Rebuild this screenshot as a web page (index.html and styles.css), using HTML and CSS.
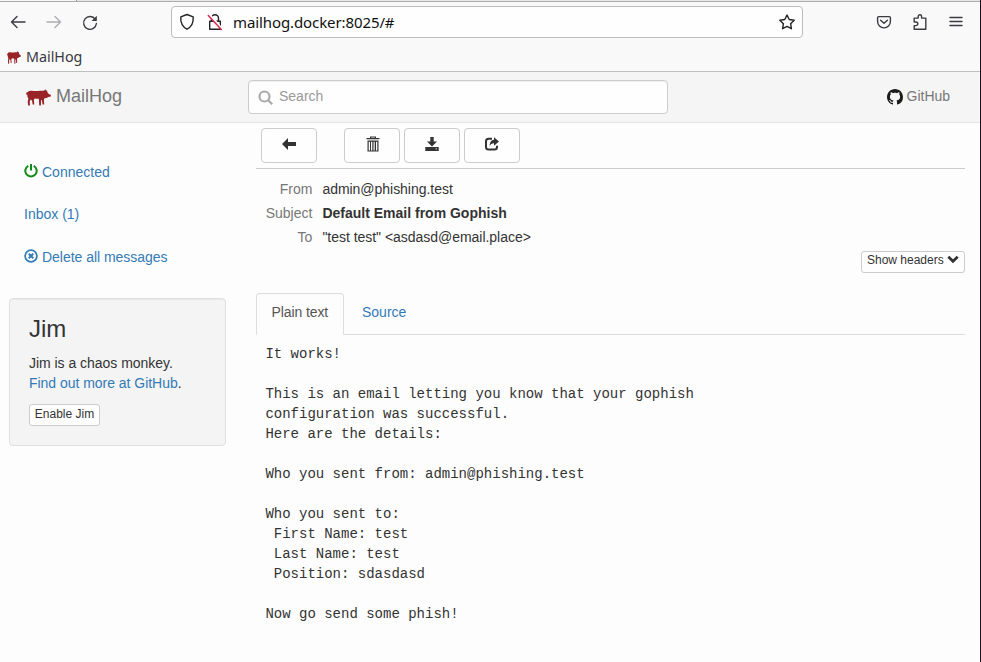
FILE: index.html
```html
<!DOCTYPE html>
<html lang="en">
<head>
<meta charset="utf-8">
<title>MailHog</title>
<link rel="stylesheet" href="styles.css">
</head>
<body>
<svg class="defs" width="0" height="0">
  <symbol id="pig" viewBox="0 0 24 16">
    <path fill="#982427" d="M1 5.800C-.3 5 .1 2.800 1.300 3L2.200 2.200C3.500 1.100 5.300 1.600 7 1.700C10 1.900 12.800 1.200 15.500 1.500L17.200 1.500L18.600 0L19.200 1.500L20.300 1L20.400 2.800L21.800 4.700L24 5.700L23.400 7.200L21.300 7.400C20 8.600 18.700 8.500 17.700 8.700L17.200 10.200L17.500 14.800H15.900L15.300 10.600L14.500 10.300L14.300 15.600H12.700L12.300 9.200C10.500 9.300 9 9 8.300 8.900L7.500 10.400L8 14.800H6.400L5.800 11L4.600 9.900L3.600 11.700L3.800 15.600H2.100L1.600 12L2.300 9C1.300 7.700 1.100 6.500 1.400 4.500Z"/>
  </symbol>
</svg>
<div class="window">
  <div class="tabedge"></div>
  <div class="navbar">
    <svg class="ic back" width="16" height="16" viewBox="0 0 16 16"><path d="M15 8H1.500M7 2.500L1.500 8L7 13.500"/></svg>
    <svg class="ic fwd" width="16" height="16" viewBox="0 0 16 16"><path d="M1 8H14.500M9 2.500L14.500 8L9 13.500"/></svg>
    <svg class="ic reload" width="16" height="16" viewBox="0 0 16 16"><path d="M13.300 4.300A6.400 6.400 0 1 0 14.400 8.500"/><path class="solid" d="M14.800.8V6H9.600Z"/></svg>
    <div class="url">
      <svg class="ic shield" width="16" height="18" viewBox="0 0 16 18"><path d="M8 1.500L14.200 3.900C14.600 9.500 12.300 14 8 16.200C3.700 14 1.400 9.500 1.800 3.900Z"/></svg>
      <svg class="ic lock" width="16" height="18" viewBox="0 0 16 18"><path d="M4.500 8V5.300A3.500 3.500 0 0 1 11.500 5.300V8M2.700 8.200H13.300V16.200H2.700Z"/><path class="halo" d="M2.800 2L15.300 16"/><path class="slash" d="M1.300 2.500L14.300 16.500"/></svg>
      <span class="address">mailhog.docker:8025/#</span>
      <svg class="ic star" width="16" height="16" viewBox="0 0 16 16"><path d="M8 1L10.200 5.500L15.200 6.200L11.600 9.700L12.400 14.700L8 12.400L3.600 14.700L4.400 9.700L.8 6.200L5.800 5.500Z"/></svg>
    </div>
    <svg class="ic pocket" width="16" height="16" viewBox="0 0 16 16"><path d="M2.700 2.600H13.300Q14.400 2.600 14.400 3.700V7.500A6.400 6.400 0 0 1 1.600 7.500V3.700Q1.600 2.600 2.700 2.600ZM4.600 6.200L8 9.300L11.400 6.200"/></svg>
    <svg class="ic puzzle" width="16" height="18" viewBox="0 0 16 18"><path d="M6.200 5.100V3.400A1.700 1.700 0 0 1 9.600 3.400V5.100H13.800V16.200H2.200V12.600H4A1.800 1.800 0 0 0 4 9H2.200V5.100Z"/></svg>
    <svg class="ic menu" width="14" height="14" viewBox="0 0 14 14"><path d="M1 2.500H13M1 6.500H13M1 10.500H13"/></svg>
  </div>
  <div class="bookmarks">
    <svg class="minipig" width="14" height="13" viewBox="0 0 24 16" preserveAspectRatio="none"><use href="#pig" width="24" height="16"/></svg>
    <span>MailHog</span>
  </div>
  <header class="top">
    <a class="brand"><svg width="25" height="17"><use href="#pig" width="25" height="17"/></svg><span>MailHog</span></a>
    <div class="search">
      <svg width="16" height="16" viewBox="0 0 16 16"><circle cx="6.500" cy="6.500" r="5" /><path d="M10.200 10.200L14.200 14.200"/></svg>
      <span>Search</span>
    </div>
    <a class="github"><svg width="16" height="16" viewBox="0 0 16 16"><path d="M8 0C3.580 0 0 3.580 0 8c0 3.540 2.290 6.530 5.470 7.590.4.070.55-.17.55-.38 0-.19-.01-.82-.01-1.490-2.010.37-2.530-.49-2.690-.94-.09-.23-.48-.94-.82-1.130-.28-.15-.68-.52-.01-.53.63-.01 1.080.58 1.230.82.72 1.210 1.870.87 2.330.66.07-.52.28-.87.51-1.070-1.780-.2-3.640-.89-3.640-3.950 0-.87.31-1.590.82-2.150-.08-.2-.36-1.020.08-2.120 0 0 .67-.21 2.200.82.64-.18 1.320-.27 2-.27s1.360.09 2 .27c1.530-1.040 2.200-.82 2.200-.82.44 1.100.16 1.920.08 2.120.51.56.82 1.270.82 2.150 0 3.070-1.870 3.750-3.650 3.950.29.25.54.73.54 1.480 0 1.070-.01 1.930-.01 2.200 0 .21.15.46.55.38A8.010 8.010 0 0 0 16 8c0-4.420-3.580-8-8-8Z"/></svg><span>GitHub</span></a>
  </header>
  <div class="content">
    <aside>
      <nav>
        <a><svg width="14" height="14" viewBox="0 0 14 14"><path class="power" d="M4.300 1.800A5.700 5.700 0 1 0 9.700 1.800M7 0V6.500"/></svg><span>Connected</span></a>
        <a><span class="inbox">Inbox (1)</span></a>
        <a><svg width="14" height="14" viewBox="0 0 14 14"><circle class="ring" cx="7" cy="7" r="5.900"/><path class="cross" d="M4.700 4.700L9.300 9.300M9.300 4.700L4.700 9.300"/></svg><span class="delete">Delete all messages</span></a>
      </nav>
      <section class="well">
        <h3>Jim</h3>
        <p><span class="chaos">Jim is a chaos monkey.</span><br><a>Find out more at GitHub</a>.</p>
        <button>Enable Jim</button>
      </section>
    </aside>
    <main>
      <div class="toolbar">
        <button><svg width="16" height="14" viewBox="0 0 16 14"><path d="M1 7L7 1V5H15V9H7V13Z"/></svg></button>
        <button class="gap"><svg width="14" height="16" viewBox="0 0 14 16"><path d="M4 2V.5H10V2H13.500V3.300H.5V2ZM5.200 2H8.800V1.500H5.200ZM1.500 4.500H12.500V15.500H1.500ZM2.700 5.700V14.500H4V5.700ZM5 5.700V14.500H6.300V5.700ZM7.500 5.700V14.500H8.700V5.700ZM10 5.700V14.500H11.300V5.700Z" fill-rule="evenodd"/></svg></button>
        <button><svg width="14" height="14" viewBox="0 0 14 14"><path d="M5.300 0H8.700V4.500H12L7 9.500L2 4.500H5.300ZM.3 10H13.700V14H.3ZM10.500 11.500V12.200H12V11.500Z" fill-rule="evenodd"/></svg></button>
        <button><svg width="14" height="14" viewBox="0 0 14 14"><path class="box" d="M7 1.800H3.500Q1 1.800 1 4.300V10Q1 12.500 3.500 12.500H9.500Q12 12.500 12 10V8.800"/><path d="M9 .3L14 4.500L9 8.700V6.300Q6 6 4.500 9Q4.800 3.200 9 2.700Z"/></svg></button>
      </div>
      <div class="meta">
        <dl>
          <dt>From</dt><dd class="from">admin@phishing.test</dd>
          <dt>Subject</dt><dd class="subject">Default Email from Gophish</dd>
          <dt>To</dt><dd class="to">"test test" &lt;asdasd@email.place&gt;</dd>
        </dl>
        <button class="headers">Show headers <svg width="12" height="9" viewBox="0 0 12 9"><path d="M1.300 1.800L6 6.300L10.700 1.800"/></svg></button>
      </div>
      <div class="tabs"><a class="active">Plain text</a><a class="source">Source</a></div>
<pre>It works!

This is an email letting you know that your gophish
configuration was successful.
Here are the details:

Who you sent from: admin@phishing.test

Who you sent to:
 First Name: test
 Last Name: test
 Position: sdasdasd

Now go send some phish!</pre>
    </main>
  </div>
</div>
</body>
</html>
```
FILE: styles.css
```css
* { box-sizing: border-box; }
body { margin: 0; background: #fdfdfd; color: #333; font: 14px/20px "Liberation Sans", Arial, sans-serif; }
.defs { display: block; height: 0; }
svg { flex: none; display: block; }
button { font: inherit; color: #333; background: #fefefe; border: 1px solid #ccc; border-radius: 4px; padding: 0; }
.window { width: 981px; height: 662px; overflow: hidden; border-right: 1px solid #210d22; }
.tabedge { height: 2px; background: linear-gradient(90deg, #f5f7f6 76px, #999 76px 77px, #e6e8e7 77px) top / 100% 1px no-repeat, #aaadab; }

.navbar { height: 41px; background: #f9f9fa; display: flex; align-items: flex-start; padding: 4px 0 0 10px; }
.ic { fill: none; stroke: #3b3b40; stroke-width: 1.4; stroke-linejoin: round; stroke-linecap: round; }
.navbar > .ic { margin-top: 8px; }
.navbar > .fwd { stroke: #adadb0; margin-left: 20px; }
.navbar > .reload { margin-left: 20px; margin-top: 9px; }
.ic .solid { fill: #3b3b40; stroke: none; }
.url { width: 632px; height: 32px; margin: 0 73px 0 73px; border: 1px solid #bdbdc0; border-radius: 4px; background: #fefefe; display: flex; align-items: center; padding: 0 0 0 7px; }
.url .ic { stroke: #222226; }
.lock { margin-left: 12px; }
.lock .halo { stroke: #fff; stroke-width: 2; }
.ic .slash { stroke: #e22850; stroke-width: 1.5; }
.address { font: 15px/20px "Noto Sans", sans-serif; color: #111; margin-left: 10px; width: 546px; letter-spacing: -.1px; }
.navbar > .puzzle { margin-left: 20px; margin-top: 7px; }
.navbar > .menu { margin-left: 21px; margin-top: 9px; }

.bookmarks { height: 29px; background: #f9f9fa; border-bottom: 1px solid #bfbfc1; display: flex; align-items: center; padding-left: 7px; gap: 5px; font: 14.3px/20px "Noto Sans", sans-serif; color: #38383d; }

.top { height: 51px; background: #f5f5f5; border-bottom: 1px solid #e5e5e5; display: flex; align-items: center; padding-left: 26px; color: #777; }
.brand { display: flex; align-items: center; gap: 5px; width: 222px; font-size: 18px; }
.brand span { margin-top: -2px; }
.search { width: 420px; height: 34px; border: 1px solid #ccc; border-radius: 4px; background: #fefefe; box-shadow: inset 0 1px 1px rgba(0,0,0,.06); display: flex; align-items: center; gap: 5px; padding-left: 9px; color: #999; }
.search svg { fill: none; stroke: #aaa; stroke-width: 2.200; margin-top: 1px; }
.search span, .github span { margin-top: -2px; }
.github { display: flex; align-items: center; gap: 3.5px; margin-left: 219px; }
.github svg { fill: #1c1c1c; }

.content { display: flex; }
aside { width: 226px; padding: 28px 0 0 9px; }
nav { padding-left: 15px; height: 147px; }
nav a { display: flex; align-items: center; gap: 4px; height: 42.5px; color: #337ab7; }
nav svg { fill: none; stroke: #337ab7; margin-top: -2px; }
.inbox { margin-top: -2px; }
.delete { letter-spacing: -.03px; }
.power { stroke: #128a17; stroke-width: 2; }
.ring { stroke-width: 1.7; }
.cross { stroke-width: 2; }
.well { width: 217px; height: 148px; border: 1px solid #e0e0e0; border-radius: 4px; background: #f4f4f4; box-shadow: inset 0 1px 1px rgba(0,0,0,.05); padding: 17px 19px; }
h3 { font-size: 24px; line-height: 26px; font-weight: 400; margin: 0 0 11px; }
p { margin: 0 0 11px; letter-spacing: -.03px; }
p a { color: #337ab7; }
.well button { display: block; width: 71px; height: 22px; border-radius: 3px; font-size: 12px; line-height: 18px; padding-bottom: 2px; }

main { width: 709px; margin-left: 30px; }
.toolbar { height: 46px; border-bottom: 1px solid #ccc; display: flex; padding: 5px 0 0 5px; gap: 4px; }
.toolbar button { width: 56px; height: 35px; display: flex; align-items: center; justify-content: center; padding-bottom: 4px; }
.toolbar .gap { margin-left: 23px; }
.gap svg { margin-left: 1px; }
.toolbar svg { fill: #333; }
.toolbar .box { fill: none; stroke: #333; stroke-width: 2; }
.meta { height: 124px; padding-top: 8px; display: flex; justify-content: space-between; align-items: flex-start; }
dl { display: grid; grid-template-columns: 56.4px 300px; column-gap: 10px; grid-auto-rows: 24px; line-height: 24px; margin: 0; white-space: nowrap; }
dt { text-align: right; color: #777; }
dd { margin: 0; }
.from, .to { letter-spacing: -.03px; }
.subject { font-weight: 700; }
.headers { width: 104px; height: 22px; margin-top: 74px; border-radius: 3px; font-size: 12px; line-height: 16px; display: flex; align-items: flex-start; gap: 3px; padding-left: 5px; white-space: nowrap; }
.headers svg { fill: none; stroke: #333; stroke-width: 2.800; margin-top: 3px; }
.tabs { height: 42px; border-bottom: 1px solid #ddd; display: flex; line-height: 38px; }
.tabs a { height: 42px; }
.tabs .active { width: 88px; border: 1px solid #ddd; border-bottom-color: #fdfdfd; border-radius: 4px 4px 0 0; padding-left: 14.5px; color: #555; background: #fdfdfd; line-height: 37px; white-space: nowrap; letter-spacing: -.1px; }
.source { color: #337ab7; padding-left: 18px; }
pre { margin: 0; padding: 9px 0 0 9.4px; font: 14px/20px "Liberation Mono", monospace; }
```
